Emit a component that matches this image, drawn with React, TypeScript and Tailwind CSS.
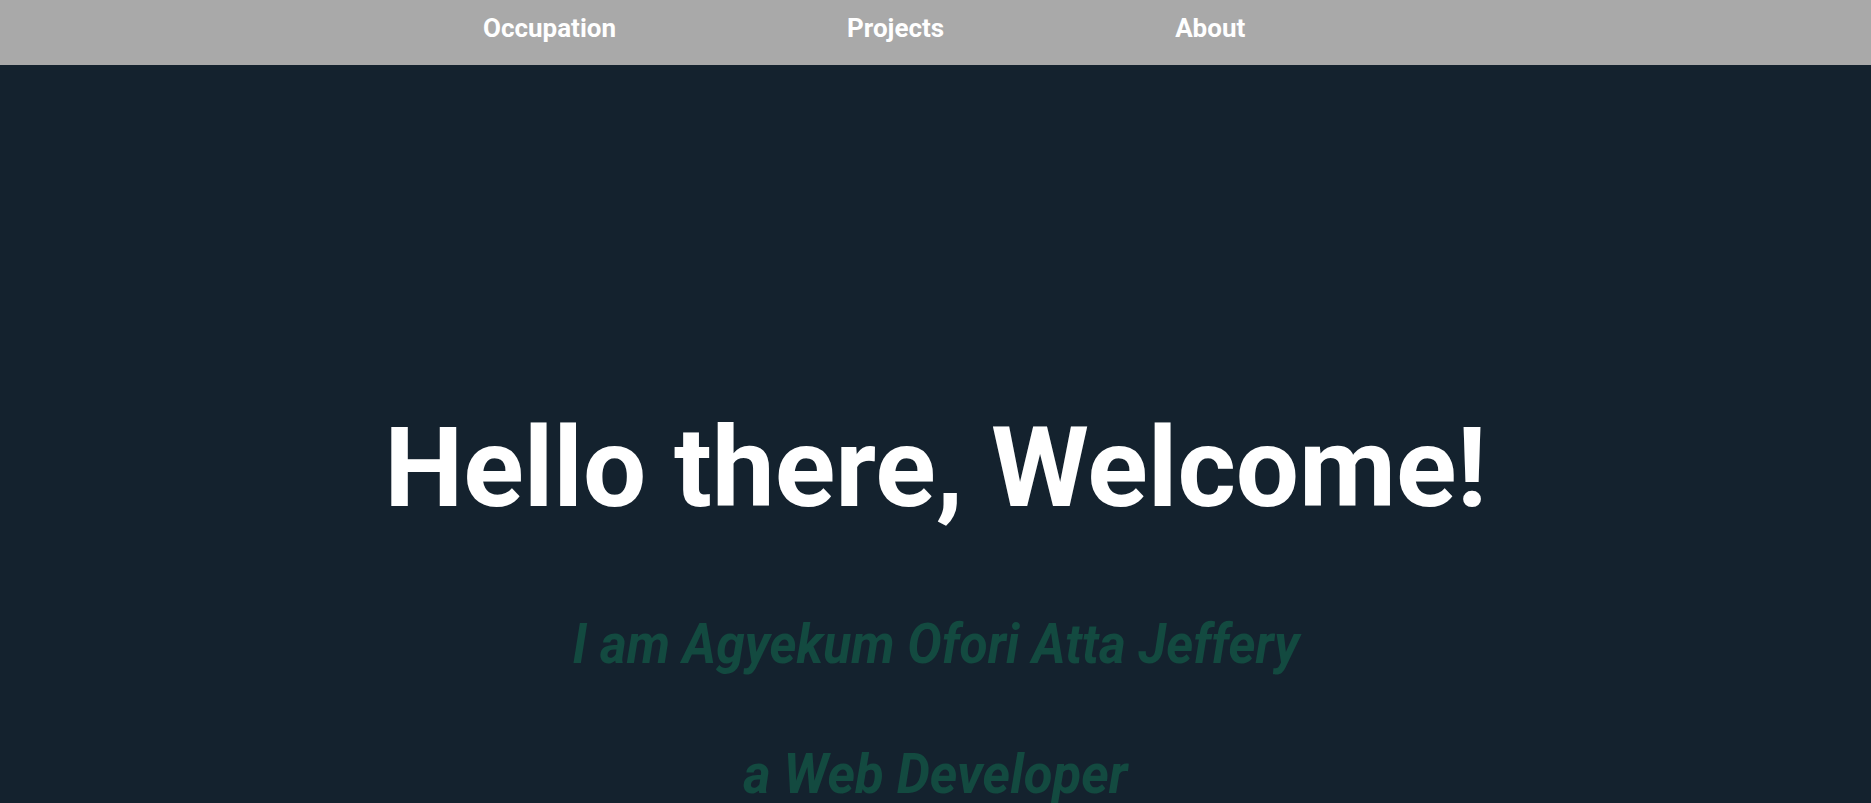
export default function App() {
  return (
    <div className="min-h-screen bg-[#14222e] font-['Roboto',sans-serif] text-white">
      {/* NAV */}
      <nav className="h-[65px] bg-[#a9a9a9]">
        <ul className="flex items-start gap-[231px] pl-[483px] pt-[15px] text-[26px] font-bold leading-none">
          <li>Occupation</li>
          <li>Projects</li>
          <li>About</li>
        </ul>
      </nav>

      {/* HERO */}
      <section className="flex flex-col items-center pt-[347px] pb-10 text-center">
        <h1 className="text-[112px] font-bold leading-none">
          Hello there, Welcome!
        </h1>
        <h2 className="mt-[92px] origin-center scale-x-[0.92] text-[56px] font-bold italic leading-none text-[#134a40]">
          I am Agyekum Ofori Atta Jeffery
        </h2>
        <h3 className="mt-[74px] origin-center scale-x-[0.94] text-[56px] font-bold italic leading-none text-[#134a40]">
          a Web Developer
        </h3>
      </section>
    </div>
  );
}
